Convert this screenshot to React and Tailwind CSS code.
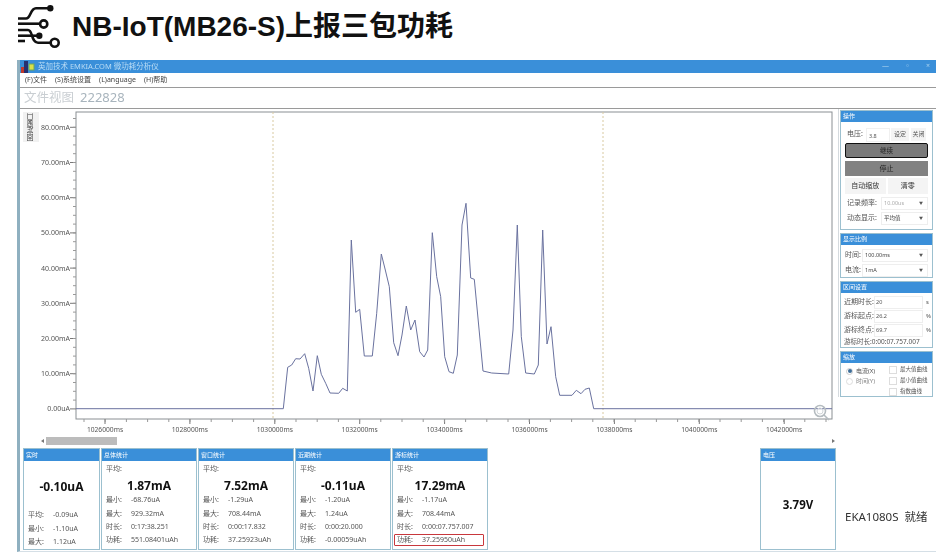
import React from "react";

const cjk = "font-['Noto_Sans','Noto_Sans_CJK_SC',sans-serif]";

const tracePoints = [
  [76, 408.7], [283.3, 408.7], [287.7, 367.3], [291.7, 365], [295.7, 358.7], [300, 359], [304.7, 353.7],
  [308.7, 368.3], [313, 391], [317.3, 355.7], [321.3, 374.3], [325.7, 383.3], [330, 393], [338.7, 393.3],
  [342.7, 388.3], [347.3, 391], [351.3, 240], [355.7, 312.3], [359.7, 309.3], [364.3, 356], [372.3, 356],
  [376.7, 313.3], [381.3, 254], [385.3, 270], [389.3, 286.7], [393.7, 342.7], [398, 355.7], [402, 335],
  [406.3, 306], [410.7, 330], [415, 320], [419.7, 351.7], [424, 357], [427.7, 350], [432.3, 232.7],
  [436.7, 276.7], [440.7, 296.7], [444.7, 356.7], [449, 371.7], [453.3, 373.3], [457.3, 355], [462, 225],
  [466, 203.3], [470.7, 278], [474.3, 279.3], [483, 371], [491.7, 373], [508.7, 374], [513, 330],
  [517.3, 225], [521.3, 336.7], [525.7, 373], [534.3, 374], [538.3, 365], [542.7, 230], [547, 344],
  [551, 326.7], [555.7, 376.7], [559.7, 395.3], [572, 395.3], [576.3, 390.3], [581, 393.7], [585, 389.3],
  [589.3, 388], [593.7, 408.7], [832, 408.7],
];

const yLabels = ["80.00mA", "70.00mA", "60.00mA", "50.00mA", "40.00mA", "30.00mA", "20.00mA", "10.00mA", "0.00uA"];
const xLabels = ["1026000ms", "1028000ms", "1030000ms", "1032000ms", "1034000ms", "1036000ms", "1038000ms", "1040000ms", "1042000ms"];

const Logo = () => (
  <svg viewBox="12 2 56 52" className="w-[56px] h-[52px] shrink-0 -ml-[6px]" fill="none" stroke="#111" strokeWidth="2.6">
    <path d="M18 19.5H26C31 19.5 30 9.3 36 9.3H50" />
    <circle cx="50.3" cy="9.3" r="3.2" fill="#111" stroke="none" />
    <path d="M18 24.7H39" />
    <circle cx="43.7" cy="25" r="3.6" />
    <path d="M18 31H28C33 31 31 43.7 38 43.7H50" />
    <path d="M18 36.7H38" />
    <circle cx="39.3" cy="36.7" r="3.2" fill="#111" stroke="none" />
    <path d="M18 42H25" />
    <circle cx="54.7" cy="43.7" r="4" />
  </svg>
);

const AppGlyph = () => (
  <svg viewBox="0 0 14 12" className="w-[14px] h-[12px] shrink-0">
    <rect x="0" y="6" width="4" height="6" fill="#c0392b" />
    <rect x="3" y="0" width="4" height="12" fill="#27306f" />
    <rect x="8" y="3" width="5" height="6" fill="#d8e04a" stroke="#6fa858" />
  </svg>
);

const Chart = () => (
  <svg viewBox="20 109 816 339" className="block w-[816px] h-[339px]">
    <rect x="76" y="112" width="756" height="307" fill="#fff" stroke="#8a8f93" strokeWidth="1" />
    {/* y axis */}
    {yLabels.map((label, i) => (
      <g key={label}>
        <line x1="70" x2="76" y1={127.3 + i * 35.2} y2={127.3 + i * 35.2} stroke="#777" />
        <text x="70" y={129.8 + i * 35.2} textAnchor="end" fontSize="7" fill="#555" fontFamily="Noto Sans, sans-serif">{label}</text>
      </g>
    ))}
    {Array.from({ length: 33 }).map((_, i) => (
      <line key={i} x1="73" x2="76" y1={118.5 + i * 8.8} y2={118.5 + i * 8.8} stroke="#999" />
    ))}
    {/* x axis */}
    {xLabels.map((label, i) => (
      <g key={label}>
        <line x1={105 + i * 84.9} x2={105 + i * 84.9} y1="419" y2="424" stroke="#777" />
        <text x={105 + i * 84.9} y="432" textAnchor="middle" fontSize="6.7" fill="#555" fontFamily="Noto Sans, sans-serif">{label}</text>
      </g>
    ))}
    {Array.from({ length: 36 }).map((_, i) => (
      <line key={i} x1={84 + i * 21.2} x2={84 + i * 21.2} y1="419" y2="422" stroke="#999" />
    ))}
    {/* cursors */}
    <line x1="273" x2="273" y1="112" y2="419" stroke="#d8c9a0" strokeDasharray="2 2" />
    <line x1="603" x2="603" y1="112" y2="419" stroke="#d8c9a0" strokeDasharray="2 2" />
    <polyline points={tracePoints.map((p) => p.join(",")).join(" ")} fill="none" stroke="#6a729f" strokeWidth="1" />
    {/* zoom glyph */}
    <circle cx="820" cy="411" r="5.5" fill="none" stroke="#b5bcc0" strokeWidth="1.6" />
    <circle cx="820" cy="411" r="3" fill="none" stroke="#d0d5d8" />
    <line x1="824" x2="829" y1="415" y2="420" stroke="#b5bcc0" strokeWidth="1.6" />
    {/* scrollbar */}
    <path d="M44 439V443L41 441Z" fill="#777" />
    <rect x="46" y="437" width="71" height="8" fill="#bcbcbc" />
    <path d="M832 439V443L835 441Z" fill="#777" />
  </svg>
);

const StatRow = ({ label, value }) => (
  <div className="flex items-center h-[13.3px] text-[7px] text-[#555]">
    <span className="w-[25px] shrink-0">{label}</span>
    <span>{value}</span>
  </div>
);

const StatCard = ({ title, value, rows, avg, boxedLast, width = "w-[96px]" }) => (
  <div className={`${width} shrink-0 h-[102px] border border-[#9cc0cf] flex flex-col bg-white`}>
    <div className="h-[12px] bg-[#3a8fd9] text-white text-[6px] leading-[12px] pl-[2px] shrink-0">{title}</div>
    <div className="flex-1 flex flex-col pl-[4px] relative">
      {avg ? (
        <div className="text-[7px] text-[#555] h-[14px] mt-[1px] leading-[14px]">平均:</div>
      ) : (
        <div className="h-[16px]" />
      )}
      <div className="text-[12px] font-bold text-[#111] text-center h-[20px] leading-[20px] pr-[4px]">{value}</div>
      <div className={avg ? "mt-[-2px]" : "mt-[12px]"}>
        {rows.map(([label, val]) => (
          <StatRow key={label} label={label} value={val} />
        ))}
      </div>
      {boxedLast && (
        <div className="absolute left-[1px] right-[3px] bottom-[3px] h-[12px] border-[1.5px] border-[#c8373c] rounded-[1px]" />
      )}
    </div>
  </div>
);

const Panel = ({ title, children, className = "" }) => (
  <div className={`w-[93px] border border-[#9cc0cf] bg-white ${className}`}>
    <div className="h-[11px] bg-[#3a8fd9] text-white text-[6px] leading-[11px] pl-[2px]">{title}</div>
    {children}
  </div>
);

const Dropdown = ({ value, muted, className = "" }) => (
  <div className={`flex-1 h-[13px] border border-[#eee] flex items-center justify-between px-[2px] text-[5.5px] ${muted ? "text-[#aaa]" : "text-[#444]"} ${className}`}>
    <span>{value}</span>
    <span className="text-[4px] text-[#555] pr-[2px]">▼</span>
  </div>
);

const FieldRow = ({ label, value, unit }) => (
  <div className="flex items-center h-[14px] text-[7px] text-[#555]">
    <span className="w-[30px] shrink-0">{label}</span>
    <span className="w-[49px] h-[13px] border border-[#eee] text-[5.5px] leading-[11px] pl-[1px]">{value}</span>
    <span className="ml-[3px] text-[6px]">{unit}</span>
  </div>
);

const Check = ({ label }) => (
  <div className="flex items-center gap-[3px] h-[11px] text-[5.5px] text-[#555]">
    <span className="w-[8px] h-[8px] border border-[#ddd] bg-white shrink-0" />
    {label}
  </div>
);

const Sidebar = () => (
  <div className="w-[98px] shrink-0 border-l border-[#d5dade] ml-[2px] pl-[1px] pt-[1px] flex flex-col gap-[3px]">
    <Panel title="操作" className="h-[120px]">
      <div className="px-[4px] pt-[5px] flex flex-col">
        <div className="flex items-center h-[15px] text-[7px] text-[#555]">
          <span className="w-[19px] ml-[2px] shrink-0">电压:</span>
          <span className="w-[24px] h-[14px] text-[5.5px] leading-[14px] border border-[#f0f0f0] pl-[2px]">3.8</span>
          <span className="w-[18px] h-[13px] ml-[1px] bg-[#f4f4f4] text-[6px] leading-[13px] text-center">设定</span>
          <span className="w-[15px] h-[13px] ml-[2px] bg-[#f4f4f4] text-[6px] leading-[13px] text-center">关闭</span>
        </div>
        <div className="mt-[1px] h-[15px] bg-[#7a7a7a] border border-[#111] rounded-[2px] text-[6.5px] leading-[13px] text-center text-[#222]">继续</div>
        <div className="mt-[3px] h-[15px] bg-[#828282] text-[7px] leading-[15px] text-center text-[#222]">停止</div>
        <div className="mt-[2px] flex gap-[2px] text-[7px] text-[#333]">
          <span className="w-[41px] h-[16px] bg-[#f4f4f4] leading-[16px] text-center">自动缩放</span>
          <span className="w-[41px] h-[16px] bg-[#f4f4f4] leading-[16px] text-center">清零</span>
        </div>
        <div className="mt-[3px] flex items-center gap-[1px] text-[7px] text-[#555]">
          <span className="w-[33px] shrink-0 ml-[2px]">记录频率:</span>
          <Dropdown value="10.00us" muted />
        </div>
        <div className="mt-[2px] flex items-center gap-[1px] text-[7px] text-[#555]">
          <span className="w-[33px] shrink-0 ml-[2px]">动态显示:</span>
          <Dropdown value="平均值" />
        </div>
      </div>
    </Panel>
    <Panel title="显示比例" className="h-[45px]">
      <div className="px-[4px] pt-[4px] flex flex-col gap-[2px]">
        <div className="flex items-center text-[7px] text-[#555]">
          <span className="w-[17px] shrink-0">时间:</span>
          <Dropdown value="100.00ms" />
        </div>
        <div className="flex items-center text-[7px] text-[#555]">
          <span className="w-[17px] shrink-0">电流:</span>
          <Dropdown value="1mA" />
        </div>
      </div>
    </Panel>
    <Panel title="区间设置" className="h-[67px]">
      <div className="pl-[3px] pt-[2px]">
        <FieldRow label="近期时长:" value="20" unit="s" />
        <FieldRow label="游标起点:" value="26.2" unit="%" />
        <FieldRow label="游标终点:" value="69.7" unit="%" />
        <div className="text-[6.5px] text-[#555] leading-[9px] whitespace-nowrap">游标时长:0:00:07.757.007</div>
      </div>
    </Panel>
    <Panel title="缩放" className="h-[46px]">
      <div className="flex pl-[5px] pt-[1px]">
        <div className="w-[43px] pt-[2px]">
          <div className="flex items-center gap-[3px] h-[10px] text-[6px] text-[#555]">
            <span className="w-[7px] h-[7px] rounded-full border border-[#ccc] flex items-center justify-center">
              <span className="w-[4px] h-[4px] rounded-full bg-[#3d6d99]" />
            </span>
            电流(X)
          </div>
          <div className="flex items-center gap-[3px] h-[10px] text-[6px] text-[#888]">
            <span className="w-[7px] h-[7px] rounded-full border border-[#ddd]" />
            时间(Y)
          </div>
        </div>
        <div>
          <Check label="最大值曲线" />
          <Check label="最小值曲线" />
          <Check label="指数曲线" />
        </div>
      </div>
    </Panel>
  </div>
);

export default function App() {
  return (
    <div className={`w-[951px] h-[560px] bg-white overflow-hidden flex flex-col ${cjk}`}>
      {/* Slide heading */}
      <div className="h-[57px] flex items-center pl-[18px] gap-[4px] shrink-0 pb-[4px]">
        <Logo />
        <h1 className="text-[28px] font-bold text-[#111] whitespace-nowrap font-['Liberation_Sans','Noto_Sans_CJK_SC',sans-serif]">
          NB-IoT(MB26-S)上报三包功耗
        </h1>
      </div>

      {/* Analyser window */}
      <div className="ml-[17px] mt-[3px] w-[919px] h-[492px] border-l-[3px] border-l-[#8fb0c0] border-b border-b-[#d5dfe6] flex flex-col blur-[0.45px] shrink-0">
        <div className="h-[13px] bg-[#3a8fd9] flex items-center pl-[1px] text-[7.5px] text-[#b9dcf5] shrink-0">
          <AppGlyph />
          <span className="ml-[3px]">英加技术 EMKIA.COM 微功耗分析仪</span>
          <span className="ml-auto flex gap-[15px] text-[7px] text-[#a9d2ef] pr-[6px]">
            <span>—</span>
            <span>▫</span>
            <span>×</span>
          </span>
        </div>
        <div className="h-[15px] flex items-center pl-[5px] gap-[8px] text-[7px] text-[#444] border-b border-[#9a9a9a] shrink-0">
          <span>(F)文件</span>
          <span>(S)系统设置</span>
          <span>(L)anguage</span>
          <span>(H)帮助</span>
        </div>
        <div className="h-[21px] flex items-center pl-[4px] gap-[6px] text-[12.5px] text-[#c9ced2] border-b border-[#9a9a9a] shrink-0">
          <span>文件视图</span>
          <span className="text-[#a8b4bd] text-[13px]">222828</span>
        </div>

        <div className="flex flex-1 min-h-0">
          <div className="w-[816px] shrink-0 flex flex-col relative">
            <div className="absolute left-[3px] top-[3px] w-[16px] h-[30px] bg-[#f1f1f1] flex items-center justify-center">
              <span className="text-[7px] text-[#444] [writing-mode:vertical-rl] rotate-180">固定窗口</span>
            </div>
            <Chart />
            <div className="flex pl-[3px] gap-[1px]">
              <StatCard
                title="实时"
                value="-0.10uA"
                width="w-[77px]"
                rows={[["平均:", "-0.09uA"], ["最小:", "-1.10uA"], ["最大:", "1.12uA"]]}
              />
              <StatCard
                title="总体统计"
                value="1.87mA"
                avg
                rows={[["最小:", "-68.76uA"], ["最大:", "929.32mA"], ["时长:", "0:17:38.251"], ["功耗:", "551.08401uAh"]]}
              />
              <StatCard
                title="窗口统计"
                value="7.52mA"
                avg
                rows={[["最小:", "-1.29uA"], ["最大:", "708.44mA"], ["时长:", "0:00:17.832"], ["功耗:", "37.25923uAh"]]}
              />
              <StatCard
                title="近期统计"
                value="-0.11uA"
                avg
                rows={[["最小:", "-1.20uA"], ["最大:", "1.24uA"], ["时长:", "0:00:20.000"], ["功耗:", "-0.00059uAh"]]}
              />
              <StatCard
                title="游标统计"
                value="17.29mA"
                avg
                boxedLast
                rows={[["最小:", "-1.17uA"], ["最大:", "708.44mA"], ["时长:", "0:00:07.757.007"], ["功耗:", "37.25950uAh"]]}
              />
              <div className="ml-auto w-[76px] h-[102px] border border-[#9cc0cf] flex flex-col">
                <div className="h-[12px] bg-[#3a8fd9] text-white text-[6px] leading-[12px] pl-[2px]">电压</div>
                <div className="flex-1 flex items-center justify-center text-[11.5px] font-bold text-[#111]">3.79V</div>
              </div>
            </div>
          </div>
          <div className="relative flex-1">
            <Sidebar />
            <div className="absolute left-[9px] top-[399px] text-[11.5px] text-[#333] whitespace-nowrap">EKA1080S&nbsp;&nbsp;就绪</div>
          </div>
        </div>
      </div>
    </div>
  );
}
